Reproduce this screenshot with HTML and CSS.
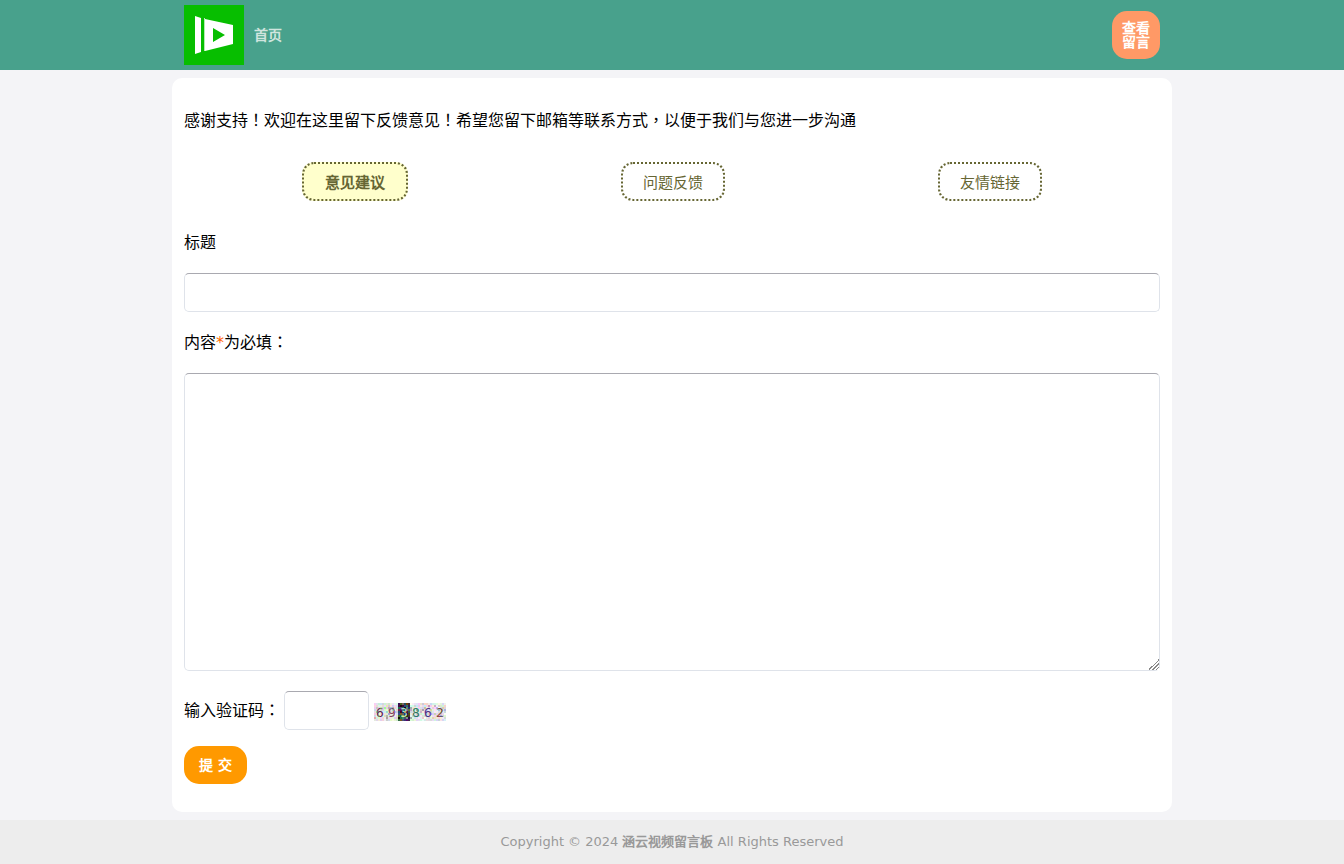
FILE: index.html
```html
<!DOCTYPE html>
<html lang="zh-CN">
<head>
<meta charset="utf-8">
<meta name="viewport" content="width=device-width, initial-scale=1">
<title>涵云视频留言板</title>
<link rel="stylesheet" href="styles.css">
</head>
<body>
<header class="header">
  <div class="header-inner">
    <nav class="nav">
      <a class="logo" href="#" aria-label="涵云视频">
        <svg viewBox="0 0 60 60" width="60" height="60" aria-hidden="true">
          <path fill="#07be00" d="M0 0h60v60H0z"/>
          <path fill="#fff" d="M11 11l6 2v34l-6 2z"/>
          <path fill="#b5ebb3" d="M20 13l1 0v33l-1 0z"/>
          <path fill="#fff" fill-rule="evenodd" d="M21 14l28 6v19l-28 7zM29 23v14l12-7z"/>
        </svg>
      </a>
      <a class="nav-link" href="#">首页</a>
    </nav>
    <a class="view-link" href="#">查看<br>留言</a>
  </div>
</header>
<main class="card">
  <form class="form">
    <p class="intro">感谢支持<span class="mark" lang="zh-TW">！</span>欢迎在这里留下反馈意见<span class="mark" lang="zh-TW">！</span>希望您留下邮箱等联系方式<span class="mark" lang="zh-TW">，</span>以便于我们与您进一步沟通</p>
    <div class="tabs">
      <button class="tab tab-active" type="button">意见建议</button>
      <button class="tab" type="button">问题反馈</button>
      <button class="tab" type="button">友情链接</button>
    </div>
    <label class="label" for="title">标题</label>
    <input class="field" id="title" type="text">
    <label class="label" for="content">内容<span class="required">*</span>为必填<span class="mark" lang="zh-TW">：</span></label>
    <textarea class="field area" id="content"></textarea>
    <div class="verify">
      <label for="code">输入验证码<span class="mark" lang="zh-TW">：</span></label>
      <input class="field code" id="code" type="text">
      <svg class="captcha" id="captcha" viewBox="0 0 72 18" width="72" height="18" role="img" aria-label="验证码"></svg>
    </div>
    <button class="submit" type="submit">提 交</button>
  </form>
</main>
<footer class="footer">Copyright © 2024 <b>涵云视频留言板</b> All Rights Reserved</footer>
<script src="captcha.js"></script>
</body>
</html>
```
FILE: captcha.js
```js
const svg = document.getElementById('captcha');
const ns = 'http://www.w3.org/2000/svg';
let seed = 7;
const rand = (lo, hi) => {
  seed = (seed * 16807) % 2147483647;
  return lo + (seed % (hi - lo + 1));
};
function add(name, attrs, text) {
  const el = document.createElementNS(ns, name);
  for (const key in attrs) el.setAttribute(key, attrs[key]);
  if (text) el.textContent = text;
  svg.appendChild(el);
}
// Noise cells: light everywhere, dark behind the third digit
for (let y = 0; y < 9; y++) {
  for (let x = 0; x < 36; x++) {
    const dark = x >= 12 && x < 18;
    const lo = dark ? 0 : 200;
    const hi = dark ? 130 : 255;
    add('rect', { x: x * 2, y: y * 2, width: 2, height: 2,
      fill: `rgb(${rand(lo, hi)},${rand(lo, hi)},${rand(lo, hi)})` });
  }
}
const inks = ['#5a2448', '#86405a', '#b9dcc8', '#2c7a64', '#4a3282', '#6e4a2c'];
[...'693862'].forEach((digit, i) => {
  add('text', { x: i * 12 + 2, y: 14, fill: inks[i], class: 'captcha-digit' }, digit);
});
// Coloured specks over the digits
for (let i = 0; i < 60; i++) {
  add('rect', { x: rand(0, 35) * 2, y: rand(1, 7) * 2, width: 2, height: 2,
    fill: `rgb(${rand(60, 255)},${rand(60, 255)},${rand(60, 255)})`, opacity: 0.4 });
}
```
FILE: styles.css
```css
* { box-sizing: border-box; }
body {
  margin: 0;
  background: #f4f4f7;
  color: #000;
  font: 16px/24px "DejaVu Sans", sans-serif;
}
a { text-decoration: none; }
button, input, textarea { font: inherit; }
.header { background: #48a18c; }
.header-inner {
  display: flex;
  align-items: center;
  justify-content: space-between;
  max-width: 1000px;
  height: 70px;
  margin: 0 auto;
  padding: 0 12px;
}
.nav { display: flex; align-items: center; gap: 10px; }
.logo svg { display: block; }
.nav-link { color: #d0e5df; font-size: 14px; font-weight: bold; }
.view-link {
  padding: 10px;
  border-radius: 15px;
  background: #ff9966;
  color: #fff;
  font-size: 14px;
  font-weight: bold;
  line-height: 14px;
}
.card {
  max-width: 1000px;
  margin: 8px auto;
  padding: 31px 12px 28px;
  border-radius: 10px;
  background: #fff;
}
.form { display: flex; flex-direction: column; align-items: flex-start; }
.mark { font-family: "Noto Sans CJK TC", sans-serif; line-height: 1; }
.intro { margin: 0 0 29px; }
.tabs {
  display: flex;
  justify-content: space-around;
  width: 100%;
  margin-bottom: 30px;
  padding: 0 12px;
}
.tab {
  height: 39px;
  padding: 2px 20px 0;
  border: 2px dotted #666633;
  border-radius: 12px;
  background: #fff;
  color: #666633;
  font-size: 15px;
}
.tab-active { padding: 2px 21px 0; background: #ffffcc; font-weight: bold; }
.label { margin-bottom: 18px; }
.required { color: #ff6600; }
.field {
  width: 100%;
  height: 39px;
  margin: 0 0 19px;
  padding: 8px;
  border: 1px solid #dfe3ea;
  border-top-color: #a9a9b0;
  border-radius: 5px;
  background: #fff;
}
.area { height: 298px; margin-bottom: 20px; }
.area::-webkit-resizer {
  background: linear-gradient(135deg, #fff 50%, #888 50% 57%, #fff 57% 66%, #888 66% 73%, #fff 73% 82%, #888 82% 89%, #fff 89%) right bottom / 11px 11px no-repeat;
}
.verify { display: flex; align-items: center; margin-bottom: 16px; }
.code { width: 85px; margin: 0 5px 0 4px; }
.captcha { display: block; margin-top: 2px; }
.captcha-digit { font: 13px "DejaVu Sans Mono", monospace; }
.submit {
  height: 38px;
  padding: 0 15px;
  border: 0;
  border-radius: 15px;
  background: #ff9900;
  color: #fff;
  font-size: 14px;
  font-weight: bold;
}
.footer {
  padding: 10px;
  background: #ededed;
  color: #999;
  font-size: 13px;
  text-align: center;
}
```
